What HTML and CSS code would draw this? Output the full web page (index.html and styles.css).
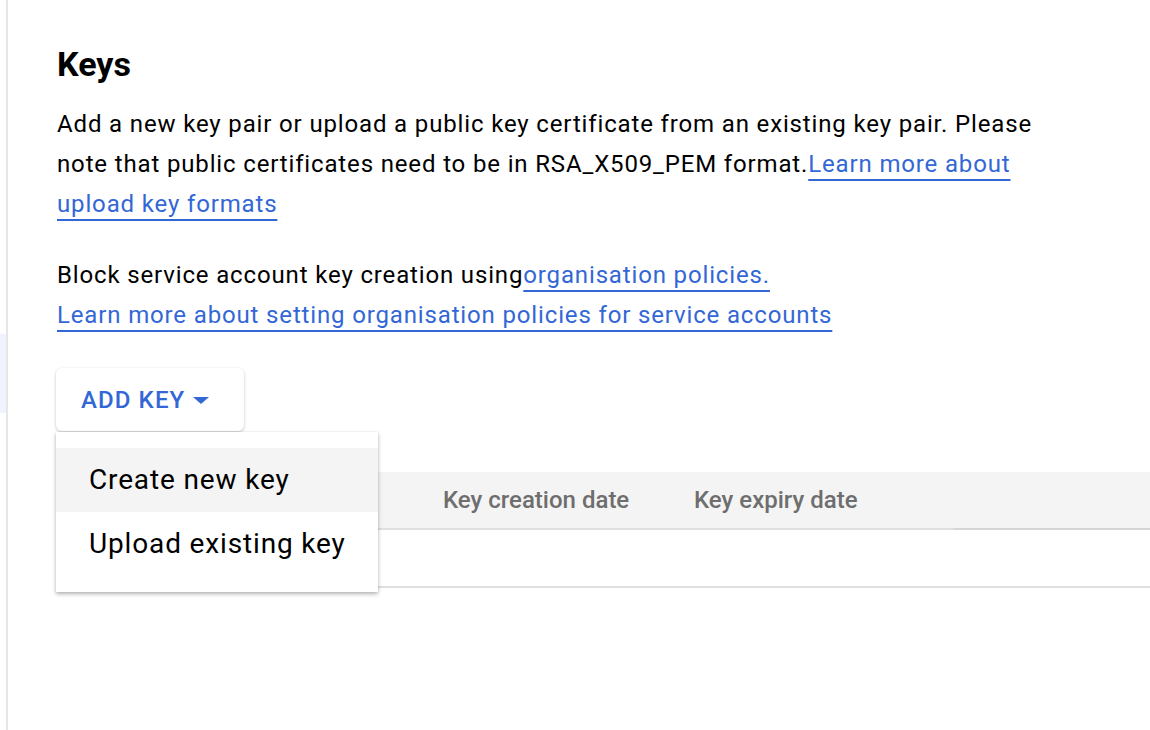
FILE: index.html
```html
<!DOCTYPE html>
<html>
<head>
<meta charset="utf-8">
<link rel="stylesheet" href="styles.css">
</head>
<body>
<div class="page">
  <div class="rail"><div class="rail-active"></div></div>
  <main class="content">
    <h1 class="title">Keys</h1>
    <p class="para">Add a new key pair or upload a public key certificate from an existing key pair. Please<br>note that public certificates need to be in RSA_X509_PEM format.<a class="link" href="#">Learn more about<br>upload key formats</a></p>
    <p class="para para2">Block service account key creation using<a class="link" href="#">organisation policies.</a><br><a class="link" href="#">Learn more about setting organisation policies for service accounts</a></p>
    <div class="actions">
      <button class="add-btn">ADD KEY <span class="caret"></span></button>
      <div class="menu">
        <div class="menu-item active">Create new key</div>
        <div class="menu-item">Upload existing key</div>
      </div>
    </div>
    <div class="table">
      <div class="thead">
        <div class="th c1"></div>
        <div class="th c2">Key creation date</div>
        <div class="th c3">Key expiry date</div>
        <div class="th c4"></div>
      </div>
      <div class="trow"></div>
    </div>
  </main>
</div>
</body>
</html>
```
FILE: styles.css
```css
* { box-sizing: border-box; }
html, body { margin: 0; padding: 0; background: #fff; }
body { font-family: Roboto, "Noto Sans", Arial, sans-serif; color: #202124; width: 1150px; height: 730px; overflow: hidden; }
.page { display: flex; height: 730px; }
.rail { width: 8px; flex: none; border-right: 2px solid #e6e6e6; padding-top: 334px; }
.rail-active { height: 79px; background: #eef3fd; }
.content { flex: 1; padding: 43px 0 0 49px; min-width: 0; }
.title { margin: 0; font-size: 34px; line-height: 42px; font-weight: 700; color: #000; }
.para { margin: 19px 0 0; font-size: 24px; line-height: 40px; color: #000; letter-spacing: 0.85px; white-space: nowrap; }
.para2 { margin-top: 31px; }
.link { color: #3367d6; text-decoration: underline; text-decoration-thickness: 2px; text-underline-offset: 7px; }
.actions { position: relative; margin: 33px 0 0 -1px; height: 104px; }
.add-btn { display: flex; align-items: center; height: 63px; width: 188px; padding: 0 0 0 25px; border: none; border-radius: 6px; background: #fff; box-shadow: 0 1px 3px rgba(0,0,0,0.25); font-family: Roboto, Arial, sans-serif; font-size: 24px; font-weight: 500; color: #3367d6; letter-spacing: 1.1px; }
.caret { display: inline-block; width: 0; height: 0; margin-left: 8px; border-left: 8px solid transparent; border-right: 8px solid transparent; border-top: 7px solid #3367d6; margin-top: 2px; }
.menu { position: absolute; left: 0; top: 64px; width: 322px; padding: 16px 0; background: #fff; box-shadow: 0 2px 4px rgba(0,0,0,0.3), 0 0 1px rgba(0,0,0,0.1); z-index: 5; }
.menu-item { height: 64px; line-height: 64px; padding-left: 33px; font-size: 28px; color: #000; letter-spacing: 0.85px; }
.menu-item.active { background: #f4f4f4; }
.thead { display: flex; height: 58px; background: #f4f4f4; border-bottom: 2px solid #e0e0e0; }
.th { font-size: 24px; font-weight: 500; color: #6e6e6e; line-height: 56px; }
.c1 { width: 386px; }
.c2 { width: 251px; }
.c3 { width: 259px; }
.c4 { flex: 1; border-bottom: 2px solid #d6d6d6; margin-bottom: -2px; }
.trow { height: 58px; border-bottom: 2px solid #e0e0e0; }
```
